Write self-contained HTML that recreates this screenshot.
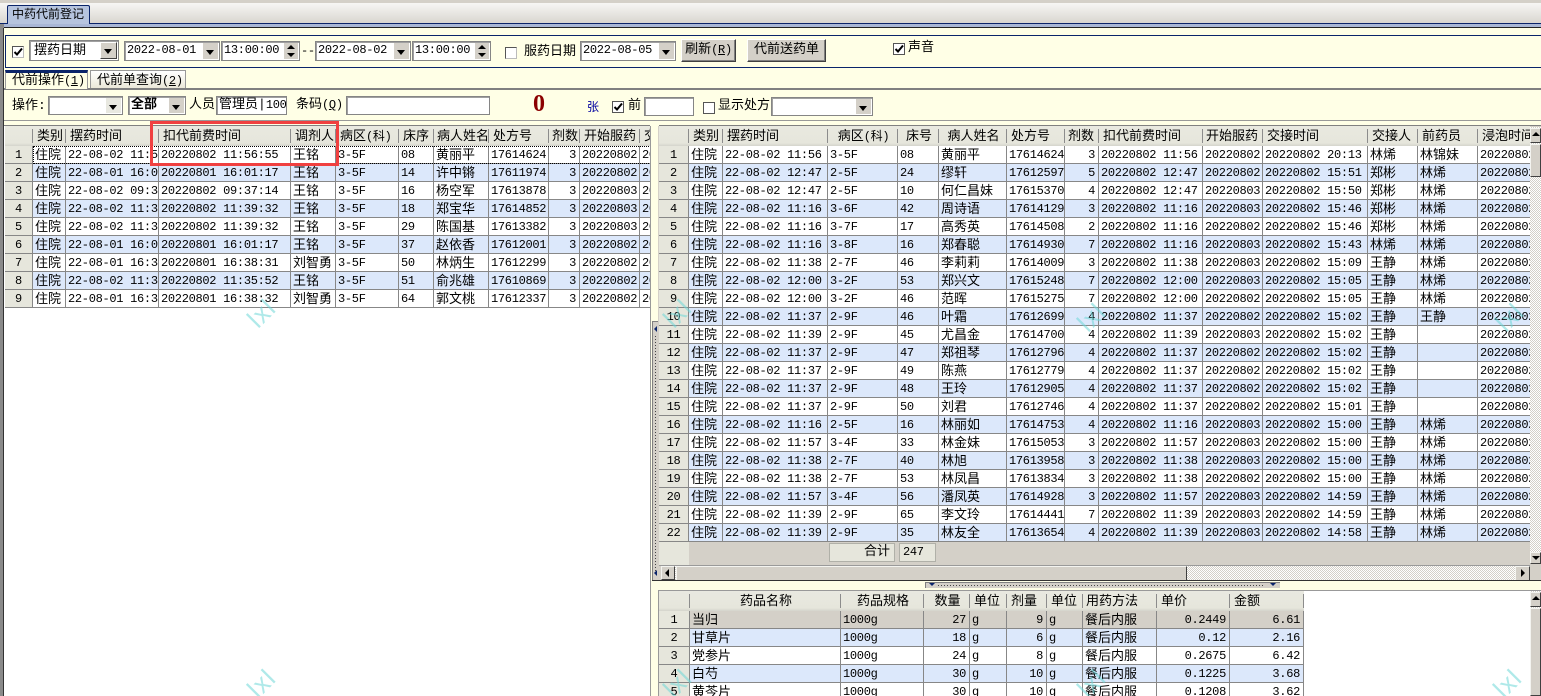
<!DOCTYPE html>
<html lang="zh"><head><meta charset="utf-8"><title>中药代前登记</title>
<style>
html,body{margin:0;padding:0;width:1541px;height:696px;overflow:hidden;background:#fff}
*{box-sizing:border-box}
body{position:relative;font:13px "Liberation Mono","WenQuanYi Zen Hei","Noto Sans CJK SC",sans-serif;color:#000}
.b,.t,.w{position:absolute}
.t{white-space:nowrap;line-height:16px}
.n{font-size:12px;letter-spacing:-.3px}
.box{position:absolute;background:#fff;border:1px solid #858585;box-shadow:inset 1px 1px 0 #a0a0a0;white-space:nowrap;line-height:17px;padding-left:2px;overflow:hidden}
.dd{position:absolute;right:1px;top:1px;bottom:1px;width:15px;background:#d4d0c8}
.dd:after{content:"";position:absolute;left:3px;top:7px;border:4px solid transparent;border-top:5px solid #000;border-bottom:0}
.spin{position:absolute;right:1px;top:1px;bottom:1px;width:14px;background:#d4d0c8}
.spin:before{content:"";position:absolute;left:3px;top:2px;border:4px solid transparent;border-bottom:4px solid #000;border-top:0}
.spin:after{content:"";position:absolute;left:3px;bottom:2px;border:4px solid transparent;border-top:4px solid #000;border-bottom:0}
.cb{position:absolute;width:12px;height:12px;background:#fff;border:1px solid #555;border-right-color:#bbb;border-bottom-color:#bbb}
.cb svg{position:absolute;left:0;top:0}
.btn{position:absolute;background:#d4d0c8;border:1px solid;border-color:#fff #404040 #404040 #fff;box-shadow:inset -1px -1px 0 #808080;text-align:center;line-height:19px;white-space:nowrap}
.wrap{position:absolute;overflow:hidden}
table{border-collapse:separate;border-spacing:0;table-layout:fixed;position:absolute;left:0;top:0}
td,th{height:18px;padding:0 3px 0 2px;overflow:hidden;white-space:nowrap;font-weight:400;border-right:1px solid #878787;border-bottom:1px solid #878787;font-size:12px;letter-spacing:-.3px;line-height:16px;text-align:left}
td{background:#fff;padding-top:1px}
th{height:20px;background:linear-gradient(#e9e9e0 0,#e6e6dc 85%,#d4d4cc 100%);font-size:13px;letter-spacing:0;border-right:0;border-bottom:0;padding:1px 3px 0 4px;position:relative;line-height:17px}
th:after{content:"";position:absolute;right:0;top:3px;bottom:3px;width:1px;background:#8c8c8c}
th .n{font-size:12px}
tr:nth-child(odd) td{background:#dce8fb}
td:first-child,tr:nth-child(odd) td:first-child{background:#e6e6dc;text-align:center;padding:1px 0 0}
.ch{font-size:13px;letter-spacing:0}
#L td:nth-child(2),#L td:nth-child(5),#L td:nth-child(8),#R td:nth-child(2),#R td:nth-child(6),#R td:nth-child(12),#R td:nth-child(13),#D td:nth-child(2),#D td:nth-child(8){font-size:13px;letter-spacing:0;padding-top:3px;line-height:14px}
#L td:nth-child(10),#R td:nth-child(8),#D td:nth-child(4),#D td:nth-child(6),#D td:nth-child(9),#D td:nth-child(10){text-align:right}
#R th:nth-child(4),#R th:nth-child(5),#R th:nth-child(6),#D th:nth-child(2),#D th:nth-child(3),#D th:nth-child(4){text-align:center}
#D tr.s td{background:#d4d0c8}
#D tr.s td:first-child{background:#e6e6dc}
.chk{background:repeating-conic-gradient(#d4d0c8 0 25%,#fff 0 50%) 0 0/2px 2px}
.sb{position:absolute;background:#d4d0c8;border:1px solid;border-color:#f4f4f0 #404040 #404040 #f4f4f0}
.up:after,.dn:after,.lf:after,.rt:after{content:"";position:absolute;border:4px solid transparent}
.up:after{left:1px;top:3px;border-bottom:4px solid #000;border-top:0}
.dn:after{left:1px;top:3px;border-top:4px solid #000;border-bottom:0}
.lf:after{left:3px;top:2px;border-right:4px solid #000;border-left:0}
.rt:after{left:5px;top:2px;border-left:4px solid #000;border-right:0}
.w{font:26px "Liberation Sans",sans-serif;color:rgba(110,215,215,.55);transform:rotate(-45deg);pointer-events:none;z-index:20;letter-spacing:1px}
u{text-decoration:underline}
</style></head><body>

<!-- top tab strip -->
<div class="b" style="left:0;top:0;width:1541px;height:3px;background:#d4d0c8"></div>
<div class="b" style="left:0;top:3px;width:1541px;height:20px;background:linear-gradient(#f7f6f4,#d9d6d0)"></div>
<div class="b" style="left:0;top:23px;width:1541px;height:1px;background:#0a246a"></div>
<div class="b" style="left:0;top:24px;width:1541px;height:3px;background:#a9b7d6"></div>
<div class="b" style="left:0;top:27px;width:1541px;height:1px;background:#222"></div>
<div class="b" style="left:7px;top:5px;width:83px;height:19px;background:#b6c4de;border:1px solid #0a246a;border-bottom:0;border-radius:2px 2px 0 0"></div>
<div class="t" style="left:12px;top:7px;font-size:12px">中药代前登记</div>

<!-- cream panel -->
<div class="b" style="left:0;top:24px;width:4px;height:672px;background:#8a8a8a"></div>
<div class="b" style="left:4px;top:28px;width:1537px;height:98px;background:#ffffe6"></div>
<div class="b" style="left:3px;top:28px;width:1px;height:668px;background:#333"></div>
<div class="b" style="left:5px;top:35px;width:1536px;height:33px;border:1px solid #0a246a;border-right:0"></div>

<!-- filter row -->
<div class="cb" style="left:12px;top:46px"><svg width="10" height="10"><path d="M1.5 5l2.5 2.5 5-6" fill="none" stroke="#000" stroke-width="2"/></svg></div>
<div class="box" style="left:29px;top:40px;width:90px;height:21px;padding-left:4px;line-height:19px">摆药日期<div class="btn" style="right:1px;top:1px;width:17px;height:17px;box-shadow:none"></div><div class="dd" style="background:none;right:2px"></div></div>
<div class="box n" style="left:124px;top:41px;width:96px;height:20px">2022-08-01<div class="dd"></div></div>
<div class="box n" style="left:221px;top:41px;width:79px;height:20px">13:00:00<div class="spin"></div></div>
<div class="t n" style="left:301px;top:43px">--</div>
<div class="box n" style="left:315px;top:41px;width:96px;height:20px">2022-08-02<div class="dd"></div></div>
<div class="box n" style="left:412px;top:41px;width:79px;height:20px">13:00:00<div class="spin"></div></div>
<div class="cb" style="left:505px;top:47px"></div>
<div class="t" style="left:524px;top:44px">服药日期</div>
<div class="box n" style="left:580px;top:41px;width:96px;height:20px">2022-08-05<div class="dd"></div></div>
<div class="btn" style="left:681px;top:39px;width:55px;height:23px">刷新<span class="n">(<u>R</u>)</span></div>
<div class="btn" style="left:747px;top:39px;width:79px;height:23px">代前送药单</div>
<div class="cb" style="left:893px;top:43px;border-color:#555"><svg width="10" height="10"><path d="M1.5 5l2.5 2.5 5-6" fill="none" stroke="#000" stroke-width="2"/></svg></div>
<div class="t" style="left:908px;top:40px">声音</div>

<!-- tabs -->
<div class="b" style="left:4px;top:88px;width:1537px;height:2px;background:#808080"></div>
<div class="b" style="left:5px;top:70px;width:83px;height:19px;background:#ffffe6;border-left:1px solid #999;border-right:1px solid #999;border-top:3px solid #0a246a"></div>
<div class="t" style="left:12px;top:73px">代前操作<span class="n">(<u>1</u>)</span></div>
<div class="b" style="left:90px;top:70px;width:96px;height:18px;background:linear-gradient(#fff,#ebe8d8);border:1px solid #999;border-bottom:0"></div>
<div class="t" style="left:97px;top:73px">代前单查询<span class="n">(<u>2</u>)</span></div>

<!-- toolbar -->
<div class="t" style="left:12px;top:98px">操作:</div>
<div class="box" style="left:48px;top:96px;width:75px;height:19px"><div class="dd" style="background:#e8e8e0"></div></div>
<div class="box" style="left:128px;top:96px;width:58px;height:19px;font-weight:700;line-height:16px">全部<div class="dd"></div></div>
<div class="t" style="left:189px;top:97px">人员</div>
<div class="box" style="left:216px;top:96px;width:71px;height:19px;line-height:16px">管理员|<span class="n">100</span></div>
<div class="t" style="left:296px;top:97px">条码<span class="n">(<u>Q</u>)</span></div>
<div class="box" style="left:346px;top:96px;width:144px;height:19px"></div>
<div class="t" style="left:533px;top:94px;font:700 24px/20px 'Liberation Serif',serif;color:#8b0000">0</div>
<div class="t" style="left:587px;top:100px;color:#0000a0;font-size:12px">张</div>
<div class="cb" style="left:612px;top:101px;border-color:#555"><svg width="10" height="10"><path d="M1.5 5l2.5 2.5 5-6" fill="none" stroke="#000" stroke-width="2"/></svg></div>
<div class="t" style="left:628px;top:98px">前</div>
<div class="box" style="left:644px;top:97px;width:50px;height:19px"></div>
<div class="cb" style="left:703px;top:102px;border-color:#555"></div>
<div class="t" style="left:718px;top:98px">显示处方</div>
<div class="box" style="left:771px;top:97px;width:102px;height:19px"><div class="dd"></div></div>
<div class="b" style="left:4px;top:120px;width:1537px;height:1px;background:#999"></div>
<div class="b" style="left:4px;top:125px;width:1537px;height:1px;background:#808080"></div>

<!-- left grid -->
<div class="wrap" style="left:5px;top:126px;width:645px;height:570px;background:#fff">
<table id="L" style="width:705px"><colgroup><col style="width:28px"><col style="width:33px"><col style="width:93px"><col style="width:132px"><col style="width:45px"><col style="width:63px"><col style="width:35px"><col style="width:55px"><col style="width:60px"><col style="width:31px"><col style="width:60px"><col style="width:70px"></colgroup>
<tr class="hd"><th></th><th>类别</th><th>摆药时间</th><th>扣代前费时间</th><th>调剂人</th><th>病区<span class="n">(科)</span></th><th>床序</th><th style="padding-left:3px">病人姓名</th><th>处方号</th><th style="padding-left:3px">剂数</th><th>开始服药</th><th>交接时间</th></tr>
<tr><td>1<td>住院<td>22-08-02 11:56<td>20220802 11:56:55<td class="ch">王铭<td>3-5F<td>08<td>黄丽平<td>17614624<td>3<td>20220802<td>20220802</tr>
<tr><td>2<td>住院<td>22-08-01 16:01<td>20220801 16:01:17<td class="ch">王铭<td>3-5F<td>14<td>许中锵<td>17611974<td>3<td>20220802<td>20220802</tr>
<tr><td>3<td>住院<td>22-08-02 09:37<td>20220802 09:37:14<td class="ch">王铭<td>3-5F<td>16<td>杨空军<td>17613878<td>3<td>20220803<td>20220802</tr>
<tr><td>4<td>住院<td>22-08-02 11:39<td>20220802 11:39:32<td class="ch">王铭<td>3-5F<td>18<td>郑宝华<td>17614852<td>3<td>20220803<td>20220802</tr>
<tr><td>5<td>住院<td>22-08-02 11:39<td>20220802 11:39:32<td class="ch">王铭<td>3-5F<td>29<td>陈国基<td>17613382<td>3<td>20220803<td>20220802</tr>
<tr><td>6<td>住院<td>22-08-01 16:01<td>20220801 16:01:17<td class="ch">王铭<td>3-5F<td>37<td>赵依香<td>17612001<td>3<td>20220802<td>20220802</tr>
<tr><td>7<td>住院<td>22-08-01 16:38<td>20220801 16:38:31<td class="ch">刘智勇<td>3-5F<td>50<td>林炳生<td>17612299<td>3<td>20220802<td>20220802</tr>
<tr><td>8<td>住院<td>22-08-02 11:35<td>20220802 11:35:52<td class="ch">王铭<td>3-5F<td>51<td>俞兆雄<td>17610869<td>3<td>20220802<td>20220802</tr>
<tr><td>9<td>住院<td>22-08-01 16:38<td>20220801 16:38:32<td class="ch">刘智勇<td>3-5F<td>64<td>郭文桃<td>17612337<td>3<td>20220802<td>20220802</tr>
</table>
<div class="b" style="left:28px;top:20px;width:640px;height:18px;border:1px dotted #000"></div>
</div>

<!-- red mark -->
<div class="b" style="left:150px;top:121px;width:189px;height:45px;border:3px solid #f04040;z-index:10"></div>

<!-- splitter -->
<div class="b" style="left:650px;top:121px;width:9px;height:575px;background:#ffffe6"></div>
<div class="b" style="left:650px;top:126px;width:1px;height:570px;background:#999"></div>
<div class="b" style="left:652px;top:321px;width:6px;height:260px;background:#d4d0c8;border-left:1px solid #808080;border-top:1px solid #808080"></div>
<div class="b" style="left:654px;top:326px;border:3px solid transparent;border-right:3px solid #0a246a;border-left:0"></div>
<div class="b" style="left:655px;top:336px;width:1px;height:235px;background:repeating-linear-gradient(#444 0 1px,transparent 1px 3px)"></div>
<div class="b" style="left:654px;top:570px;border:3px solid transparent;border-right:3px solid #0a246a;border-left:0"></div>

<!-- right grid -->
<div class="b" style="left:658px;top:126px;width:883px;height:455px;background:#d4d0c8"></div>
<div class="wrap" style="left:659px;top:126px;width:871px;height:416px">
<table id="R" style="width:902px"><colgroup><col style="width:30px"><col style="width:34px"><col style="width:105px"><col style="width:70px"><col style="width:41px"><col style="width:68px"><col style="width:58px"><col style="width:34px"><col style="width:104px"><col style="width:60px"><col style="width:105px"><col style="width:50px"><col style="width:60px"><col style="width:83px"></colgroup>
<tr class="hd"><th></th><th>类别</th><th>摆药时间</th><th>病区<span class="n">(科)</span></th><th>床号</th><th>病人姓名</th><th>处方号</th><th style="padding-left:3px">剂数</th><th>扣代前费时间</th><th style="padding-left:3px">开始服药</th><th>交接时间</th><th>交接人</th><th>前药员</th><th>浸泡时间</th></tr>
<tr><td>1<td>住院<td>22-08-02 11:56<td>3-5F<td>08<td>黄丽平<td>17614624<td>3<td>20220802 11:56<td>20220802<td>20220802 20:13<td>林烯<td>林锦妹<td>20220802</tr>
<tr><td>2<td>住院<td>22-08-02 12:47<td>2-5F<td>24<td>缪轩<td>17612597<td>5<td>20220802 12:47<td>20220802<td>20220802 15:51<td>郑彬<td>林烯<td>20220802</tr>
<tr><td>3<td>住院<td>22-08-02 12:47<td>2-5F<td>10<td>何仁昌妹<td>17615370<td>4<td>20220802 12:47<td>20220803<td>20220802 15:50<td>郑彬<td>林烯<td>20220802</tr>
<tr><td>4<td>住院<td>22-08-02 11:16<td>3-6F<td>42<td>周诗语<td>17614129<td>3<td>20220802 11:16<td>20220803<td>20220802 15:46<td>郑彬<td>林烯<td>20220802</tr>
<tr><td>5<td>住院<td>22-08-02 11:16<td>3-7F<td>17<td>高秀英<td>17614508<td>2<td>20220802 11:16<td>20220802<td>20220802 15:46<td>郑彬<td>林烯<td>20220802</tr>
<tr><td>6<td>住院<td>22-08-02 11:16<td>3-8F<td>16<td>郑春聪<td>17614930<td>7<td>20220802 11:16<td>20220803<td>20220802 15:43<td>林烯<td>林烯<td>20220802</tr>
<tr><td>7<td>住院<td>22-08-02 11:38<td>2-7F<td>46<td>李莉莉<td>17614009<td>3<td>20220802 11:38<td>20220803<td>20220802 15:09<td>王静<td>林烯<td>20220802</tr>
<tr><td>8<td>住院<td>22-08-02 12:00<td>3-2F<td>53<td>郑兴文<td>17615248<td>7<td>20220802 12:00<td>20220803<td>20220802 15:05<td>王静<td>林烯<td>20220802</tr>
<tr><td>9<td>住院<td>22-08-02 12:00<td>3-2F<td>46<td>范晖<td>17615275<td>7<td>20220802 12:00<td>20220802<td>20220802 15:05<td>王静<td>林烯<td>20220802</tr>
<tr><td>10<td>住院<td>22-08-02 11:37<td>2-9F<td>46<td>叶霜<td>17612699<td>4<td>20220802 11:37<td>20220802<td>20220802 15:02<td>王静<td>王静<td>20220802</tr>
<tr><td>11<td>住院<td>22-08-02 11:39<td>2-9F<td>45<td>尤昌金<td>17614700<td>4<td>20220802 11:39<td>20220803<td>20220802 15:02<td>王静<td><td>20220802</tr>
<tr><td>12<td>住院<td>22-08-02 11:37<td>2-9F<td>47<td>郑祖琴<td>17612796<td>4<td>20220802 11:37<td>20220802<td>20220802 15:02<td>王静<td><td>20220802</tr>
<tr><td>13<td>住院<td>22-08-02 11:37<td>2-9F<td>49<td>陈燕<td>17612779<td>4<td>20220802 11:37<td>20220802<td>20220802 15:02<td>王静<td><td>20220802</tr>
<tr><td>14<td>住院<td>22-08-02 11:37<td>2-9F<td>48<td>王玲<td>17612905<td>4<td>20220802 11:37<td>20220802<td>20220802 15:02<td>王静<td><td>20220802</tr>
<tr><td>15<td>住院<td>22-08-02 11:37<td>2-9F<td>50<td>刘君<td>17612746<td>4<td>20220802 11:37<td>20220802<td>20220802 15:01<td>王静<td><td>20220802</tr>
<tr><td>16<td>住院<td>22-08-02 11:16<td>2-5F<td>16<td>林丽如<td>17614753<td>4<td>20220802 11:16<td>20220803<td>20220802 15:00<td>王静<td>林烯<td>20220802</tr>
<tr><td>17<td>住院<td>22-08-02 11:57<td>3-4F<td>33<td>林金妹<td>17615053<td>3<td>20220802 11:57<td>20220803<td>20220802 15:00<td>王静<td>林烯<td>20220802</tr>
<tr><td>18<td>住院<td>22-08-02 11:38<td>2-7F<td>40<td>林旭<td>17613958<td>3<td>20220802 11:38<td>20220803<td>20220802 15:00<td>王静<td>林烯<td>20220802</tr>
<tr><td>19<td>住院<td>22-08-02 11:38<td>2-7F<td>53<td>林凤昌<td>17613834<td>3<td>20220802 11:38<td>20220802<td>20220802 15:00<td>王静<td>林烯<td>20220802</tr>
<tr><td>20<td>住院<td>22-08-02 11:57<td>3-4F<td>56<td>潘凤英<td>17614928<td>3<td>20220802 11:57<td>20220803<td>20220802 14:59<td>王静<td>林烯<td>20220802</tr>
<tr><td>21<td>住院<td>22-08-02 11:39<td>2-9F<td>65<td>李文玲<td>17614441<td>7<td>20220802 11:39<td>20220803<td>20220802 14:59<td>王静<td>林烯<td>20220802</tr>
<tr><td>22<td>住院<td>22-08-02 11:39<td>2-9F<td>35<td>林友全<td>17613654<td>4<td>20220802 11:39<td>20220803<td>20220802 14:58<td>王静<td>林烯<td>20220802</tr>
</table></div>

<!-- footer of right grid -->
<div class="b" style="left:659px;top:542px;width:30px;height:23px;background:#e6e6dc"></div>
<div class="b" style="left:659px;top:565px;width:871px;height:1px;background:#9a9a9a"></div>
<div class="b" style="left:829px;top:543px;width:66px;height:19px;background:#e6e6dc;border:1px solid #b0b0a8;text-align:right;padding-right:4px;line-height:16px">合计</div>
<div class="b n" style="left:899px;top:543px;width:37px;height:19px;background:#e6e6dc;border:1px solid #b0b0a8;padding-left:3px;line-height:16px">247</div>

<!-- right grid scrollbars -->
<div class="b chk" style="left:1530px;top:127px;width:11px;height:437px"></div>
<div class="sb up" style="left:1530px;top:128px;width:11px;height:15px"></div>
<div class="sb" style="left:1530px;top:144px;width:11px;height:33px"></div>
<div class="sb dn" style="left:1530px;top:552px;width:11px;height:12px"></div>
<div class="b chk" style="left:661px;top:566px;width:869px;height:14px"></div>
<div class="sb lf" style="left:661px;top:566px;width:14px;height:14px"></div>
<div class="sb" style="left:676px;top:566px;width:511px;height:15px"></div>
<div class="sb rt" style="left:1515px;top:566px;width:15px;height:15px"></div>
<div class="b" style="left:652px;top:580px;width:889px;height:1px;background:#333"></div>

<!-- lower splitter -->
<div class="b" style="left:658px;top:581px;width:883px;height:9px;background:#ffffe6"></div>
<div class="b" style="left:925px;top:582px;width:355px;height:6px;background:#d4d0c8;border-top:1px solid #808080;border-left:1px solid #808080"></div>
<div class="b" style="left:929px;top:583px;border:3px solid transparent;border-top:3px solid #0a246a;border-bottom:0"></div>
<div class="b" style="left:938px;top:585px;width:325px;height:1px;background:repeating-linear-gradient(90deg,#444 0 1px,transparent 1px 3px)"></div>
<div class="b" style="left:1270px;top:583px;border:3px solid transparent;border-top:3px solid #0a246a;border-bottom:0"></div>
<div class="b" style="left:658px;top:590px;width:883px;height:1px;background:#999"></div>
<div class="b" style="left:658px;top:590px;width:1px;height:106px;background:#999"></div>

<!-- lower grid -->
<div class="wrap" style="left:659px;top:591px;width:871px;height:105px;background:#fff">
<table id="D" style="width:645px"><colgroup><col style="width:31px"><col style="width:151px"><col style="width:83px"><col style="width:46px"><col style="width:37px"><col style="width:40px"><col style="width:36px"><col style="width:74px"><col style="width:73px"><col style="width:74px"></colgroup>
<tr class="hd"><th></th><th>药品名称</th><th>药品规格</th><th>数量</th><th>单位</th><th>剂量</th><th>单位</th><th style="padding-left:3px">用药方法</th><th>单价</th><th>金额</th></tr>
<tr class="s"><td>1<td>当归<td>1000g<td>27<td>g<td>9<td>g<td>餐后内服<td>0.2449<td>6.61</tr>
<tr><td>2<td>甘草片<td>1000g<td>18<td>g<td>6<td>g<td>餐后内服<td>0.12<td>2.16</tr>
<tr><td>3<td>党参片<td>1000g<td>24<td>g<td>8<td>g<td>餐后内服<td>0.2675<td>6.42</tr>
<tr><td>4<td>白芍<td>1000g<td>30<td>g<td>10<td>g<td>餐后内服<td>0.1225<td>3.68</tr>
<tr><td>5<td>黄芩片<td>1000g<td>30<td>g<td>10<td>g<td>餐后内服<td>0.1208<td>3.62</tr>
</table></div>
<div class="b chk" style="left:1530px;top:591px;width:11px;height:105px"></div>
<div class="sb up" style="left:1530px;top:592px;width:11px;height:15px"></div>
<div class="sb" style="left:1530px;top:608px;width:11px;height:88px"></div>

<!-- watermarks -->
<div class="w" style="left:248px;top:298px">lxl</div>
<div class="w" style="left:664px;top:298px">lxl</div>
<div class="w" style="left:1078px;top:302px">lxl</div>
<div class="w" style="left:1496px;top:302px">lxl</div>
<div class="w" style="left:248px;top:668px">lxl</div>
<div class="w" style="left:664px;top:668px">lxl</div>
<div class="w" style="left:1078px;top:668px">lxl</div>
<div class="w" style="left:1494px;top:668px">lxl</div>
</body></html>
